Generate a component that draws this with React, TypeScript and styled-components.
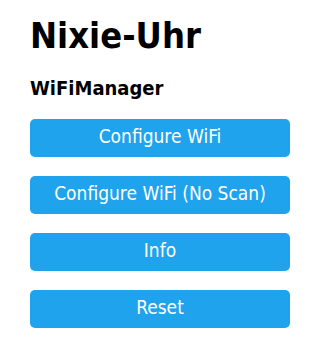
import React from "react";
import styled, { createGlobalStyle } from "styled-components";

const Global = createGlobalStyle`
  html, body { margin: 0; padding: 0; background: #ffffff; }
  body { font-family: "DejaVu Sans Condensed", "DejaVu Sans", Verdana, sans-serif; color: #000; }
`;

const Page = styled.main`
  display: flex;
  flex-direction: column;
  width: 260px;
  padding: 16px 0 0 30px;
`;

const Title = styled.h1`
  margin: 0;
  font-size: 36px;
  line-height: 40px;
  font-weight: bold;
`;

const Subtitle = styled.h3`
  margin: 21px 0 0 0;
  font-size: 20px;
  line-height: 22px;
  font-weight: bold;
`;

const Menu = styled.nav`
  display: flex;
  flex-direction: column;
  gap: 19px;
  margin-top: 20px;
`;

const MenuButton = styled.button`
  display: block;
  width: 100%;
  height: 38px;
  border: 0;
  border-radius: 5px;
  background: #1fa3ec;
  color: #ffffff;
  font-family: inherit;
  font-size: 19px;
  line-height: 35px;
  padding: 0 0 3px 0;
  text-align: center;
  cursor: pointer;
`;

const items = ["Configure WiFi", "Configure WiFi (No Scan)", "Info", "Reset"];

export default function App() {
  return (
    <>
      <Global />
      <Page>
        <Title>Nixie-Uhr</Title>
        <Subtitle>WiFiManager</Subtitle>
        <Menu>
          {items.map((t) => (
            <MenuButton key={t}>{t}</MenuButton>
          ))}
        </Menu>
      </Page>
    </>
  );
}
